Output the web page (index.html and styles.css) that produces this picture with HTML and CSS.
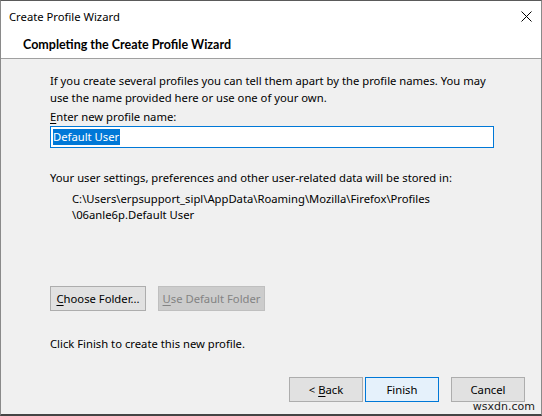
FILE: index.html
```html
<!DOCTYPE html>
<html lang="en">
<head>
    <meta charset="UTF-8">
    <title>Create Profile Wizard</title>
    <link rel="stylesheet" href="styles.css">
</head>
<body>
    <div class="window">
        <div class="titlebar">
            <span class="title">Create Profile Wizard</span>
            <span class="close">
                <svg width="11" height="11" viewBox="0 0 11 11">
                    <path d="M0.5 0.5 L10.5 10.5 M10.5 0.5 L0.5 10.5" stroke="#000" stroke-width="1" fill="none"/>
                </svg>
            </span>
        </div>

        <div class="header">Completing the Create Profile Wizard</div>

        <div class="content">
            <p class="intro">If you create several profiles you can tell them apart by the profile names. You may<br>use the name provided here or use one of your own.</p>
            <p class="label"><u>E</u>nter new profile name:</p>
            <div class="textbox"><span class="selected">Default User</span></div>

            <p class="stored">Your user settings, preferences and other user-related data will be stored in:</p>
            <p class="path">C:\Users\erpsupport_sipl\AppData\Roaming\Mozilla\Firefox\Profiles<br>\06anle6p.Default User</p>

            <div class="folder-buttons">
                <button class="btn btn-choose"><u>C</u>hoose Folder...</button>
                <button class="btn btn-default-folder" disabled><u>U</u>se Default Folder</button>
            </div>

            <p class="finish-note">Click Finish to create this new profile.</p>
        </div>

        <div class="footer">
            <button class="btn btn-nav">&lt; <u>B</u>ack</button>
            <button class="btn btn-nav btn-primary">Finish</button>
            <button class="btn btn-nav btn-cancel">Cancel</button>
        </div>

        <span class="watermark">wsxdn.com</span>
    </div>
</body>
</html>
```

FILE: styles.css
```css
* {
    margin: 0;
    padding: 0;
    box-sizing: border-box;
}

body {
    font-family: "Segoe UI", "Noto Sans", Arial, sans-serif;
    font-size: 11.25px;
    color: #000;
    background-color: #f0f0f0;
}

.window {
    position: relative;
    width: 542px;
    height: 416px;
    display: flex;
    flex-direction: column;
    background-color: #f0f0f0;
    border-top: 1px solid #5a5a5a;
    border-left: 1px solid #8a8a8a;
    border-right: 1px solid #8a8a8a;
    border-bottom: 2px solid #444;
}

.titlebar {
    height: 30px;
    background-color: #fff;
    display: flex;
    align-items: center;
    justify-content: space-between;
    padding-left: 8px;
    padding-right: 9px;
}

.close {
    display: flex;
}

.header {
    height: 28px;
    background-color: #fff;
    font-family: Lato, "Noto Sans", sans-serif;
    font-size: 12.5px;
    font-weight: bold;
    padding-left: 22px;
    line-height: 28px;
    border-bottom: 1px solid #a0a0a0;
}

.content {
    padding: 13px 0 0 49px;
    line-height: 17px;
}

.label {
    margin-top: 2px;
}

u {
    text-decoration: underline;
    text-underline-offset: 2px;
}

.textbox {
    width: 444px;
    height: 22px;
    margin-top: 1px;
    background-color: #fff;
    border: 1px solid #0078d7;
    padding: 2px 2px;
    line-height: 16px;
}

.selected {
    background-color: #0078d7;
    color: #fff;
    display: inline-block;
    padding-right: 1px;
}

.stored {
    margin-top: 21px;
}

.path {
    margin-top: 5px;
    margin-left: 22px;
    line-height: 16px;
}

.folder-buttons {
    display: flex;
    gap: 12px;
    margin-top: 63px;
}

.btn {
    font-family: inherit;
    font-size: 11.25px;
    height: 25px;
    background-color: #e1e1e1;
    border: 1px solid #adadad;
    color: #000;
    padding: 0;
}

.btn-choose {
    width: 96px;
}

.btn-default-folder {
    width: 107px;
    background-color: #cccccc;
    border-color: #bfbfbf;
    color: #838383;
}

.finish-note {
    margin-top: 24px;
}

.footer {
    margin-top: auto;
    display: flex;
    justify-content: flex-end;
    padding: 0 16px 12px 0;
}

.btn-nav {
    width: 74px;
}

.btn-primary {
    margin-left: 2px;
    background-color: #e5f1fb;
    border-color: #0078d7;
}

.btn-cancel {
    margin-left: 12px;
}

.watermark {
    position: absolute;
    right: 6px;
    bottom: 1px;
    font-family: "DejaVu Sans", sans-serif;
    font-size: 11px;
    line-height: 12px;
    color: #222;
}
```
